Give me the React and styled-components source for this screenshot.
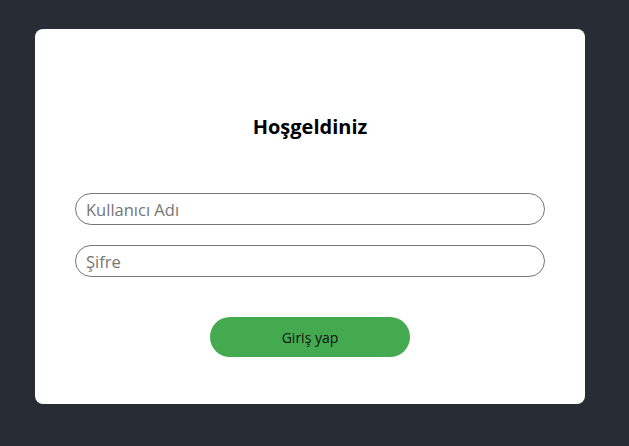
import React from 'react';
import styled, { createGlobalStyle } from 'styled-components';

const GlobalStyle = createGlobalStyle`
  html, body {
    margin: 0;
    padding: 0;
    background: #282c34;
    font-family: "Open Sans", "Noto Sans", sans-serif;
  }
`;

const Page = styled.div`
  min-height: 446px;
  padding: 29px 0 0 35px;
  box-sizing: border-box;
`;

const Card = styled.div`
  width: 550px;
  height: 375px;
  background: #ffffff;
  border-radius: 8px;
  padding: 0 40px;
  box-sizing: border-box;
  display: flex;
  flex-direction: column;
  align-items: center;
`;

const Title = styled.h2`
  margin: 85px 0 0;
  height: 26px;
  line-height: 26px;
  font-size: 20px;
  font-weight: 700;
  color: #000;
`;

const Form = styled.form`
  width: 100%;
  display: flex;
  flex-direction: column;
  align-items: center;
  margin-top: 53px;
  gap: 20px;
`;

const Input = styled.input`
  width: 100%;
  height: 32px;
  box-sizing: border-box;
  border: 1px solid #767676;
  border-radius: 16px;
  padding: 0 10px;
  font-family: inherit;
  font-size: 16.5px;
  color: #222;
  outline: none;

  &::placeholder {
    color: #757575;
  }
`;

const Button = styled.button`
  margin-top: 20px;
  width: 200px;
  height: 40px;
  border: none;
  border-radius: 20px;
  background: #44aa4f;
  color: #111;
  font-family: inherit;
  font-size: 14px;
  cursor: pointer;
`;

export default function App() {
  return (
    <>
      <GlobalStyle />
      <Page>
        <Card>
          <Title>Hoşgeldiniz</Title>
          <Form onSubmit={(e) => e.preventDefault()}>
            <Input type="text" placeholder="Kullanıcı Adı" />
            <Input type="password" placeholder="Şifre" />
            <Button type="submit">Giriş yap</Button>
          </Form>
        </Card>
      </Page>
    </>
  );
}
